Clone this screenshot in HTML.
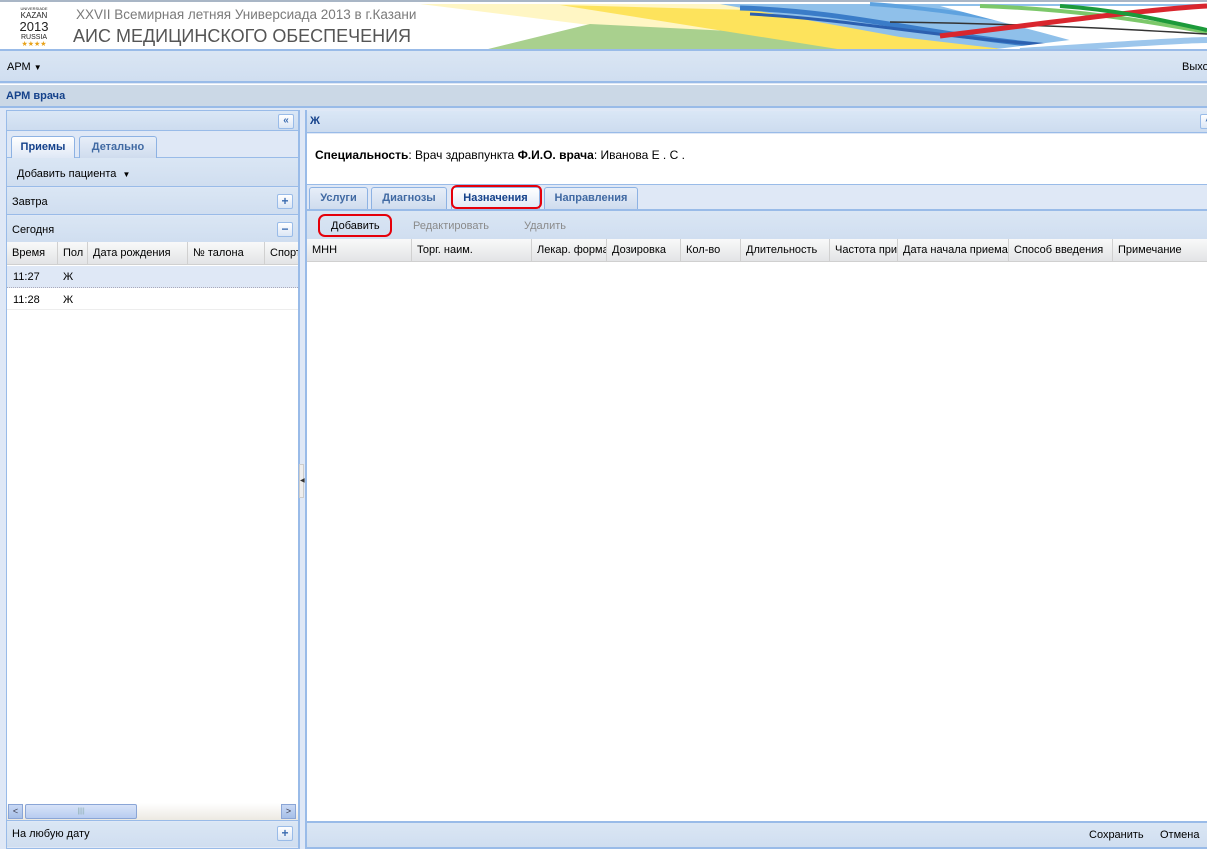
<!DOCTYPE html>
<html><head><meta charset="utf-8"><style>
*{margin:0;padding:0;box-sizing:border-box}
body{width:1207px;height:849px;overflow:hidden;position:relative;background:#dfe8f6;font-family:"Liberation Sans","DejaVu Sans",sans-serif;font-size:11px;color:#000}
.a{position:absolute}
.bar{background:linear-gradient(#dae6f4,#d0def0)}
.hdr{background:linear-gradient(#dae7f6,#cddcef);border-bottom:1px solid #99bbe8}
.tab{position:absolute;height:22px;border:1px solid #8db2e3;border-bottom:none;border-radius:3px 3px 0 0;background:linear-gradient(#e7eef8,#cfdcee);font-weight:bold;color:#416aa3;font-size:11px;line-height:20px;text-align:center}
.tab.on{background:linear-gradient(#fff,#dfe8f6);color:#15428b}
.gh{position:absolute;height:23px;background:linear-gradient(#f9f9f9,#e3e4e6);border-bottom:1px solid #d0d0d0}
.gh span{position:absolute;top:0;height:22px;line-height:22px;padding-left:5px;border-right:1px solid #d0d0d0;white-space:nowrap;overflow:hidden}
.tool{position:absolute;width:16px;height:15px;border:1px solid #99bbe8;border-radius:2px;background:linear-gradient(#fff,#dbe6f5);color:#3a6bb0;font-size:12px;line-height:12px;text-align:center;font-weight:bold}
</style></head><body>
<!-- header -->
<div class="a" style="left:0;top:0;width:1207px;height:51px;background:#fff;border-top:2px solid #a9b6c6;border-bottom:2px solid #99bbe8;overflow:hidden">
<svg class="a" style="left:420px;top:0" width="787" height="49" viewBox="0 0 787 49">
<polygon points="0,2 300,2 787,40 787,49 380,49" fill="#fff6c4"/>
<polygon points="60,49 170,22 330,30 500,49" fill="#a9d08e"/>
<polygon points="140,3 787,20 787,49 430,49" fill="#fde35c"/>
<polygon points="300,2 787,2 787,30 600,49 480,35" fill="#8fc0ea"/>
<path d="M320,6 C450,10 520,40 700,49" stroke="#3a7cc8" stroke-width="5" fill="none"/>
<path d="M330,12 C470,20 540,44 760,49" stroke="#2c60b0" stroke-width="3" fill="none"/>
<path d="M450,2 C550,8 700,40 787,42" stroke="#5ea2df" stroke-width="4" fill="none"/>
<polygon points="520,4 787,4 787,49 690,49 620,30" fill="#fff"/>
<path d="M560,4 C680,8 760,26 787,30" stroke="#7cc86a" stroke-width="4" fill="none"/>
<path d="M470,20 C620,22 720,28 787,32" stroke="#333" stroke-width="1.5" fill="none"/>
<path d="M520,34 C620,22 720,8 787,4" stroke="#d9262e" stroke-width="5" fill="none"/>
<path d="M640,4 C700,8 750,20 787,28" stroke="#1c9a3a" stroke-width="4" fill="none"/>
<polygon points="560,49 650,38 787,38 787,49" fill="#fff"/>
<path d="M600,49 C680,44 760,38 787,38" stroke="#9cc6ec" stroke-width="6" fill="none"/>
</svg>
<div class="a" style="left:14px;top:4px;width:40px;height:42px;font-size:8px;line-height:9px;text-align:center;color:#222">
<div style="font-size:4px;line-height:5px">UNIVERSIADE</div><div>KAZAN</div><div style="font-size:13px;line-height:13px">2013</div><div style="font-size:7px">RUSSIA</div><div style="color:#e8a21a;font-size:7px;line-height:6px">★★★★</div></div>
<div class="a" style="left:76px;top:5px;font-size:13.5px;color:#7a7a7a">XXVII Всемирная летняя Универсиада 2013 в г.Казани</div>
<div class="a" style="left:73px;top:24px;font-size:18px;color:#555">АИС МЕДИЦИНСКОГО ОБЕСПЕЧЕНИЯ</div>
</div>
<!-- toolbar -->
<div class="a bar" style="left:0;top:51px;width:1207px;height:32px;border-bottom:2px solid #99bbe8">
<div class="a" style="left:7px;top:10px">АРМ <span style="font-size:8px">▼</span></div>
<div class="a" style="left:1182px;top:10px">Выхо</div></div>
<div class="a" style="left:0;top:84px;width:1207px;height:24px;background:#cbd8e6;border-top:1px solid #fff;border-bottom:2px solid #99bbe8">
<div class="a" style="left:6px;top:5px;font-weight:bold;color:#15428b">АРМ врача</div></div>
<!-- left panel -->
<div class="a" style="left:6px;top:110px;width:293px;height:739px;border:1px solid #99bbe8;background:#dfe8f6"></div>
<div class="a hdr" style="left:7px;top:111px;width:291px;height:20px"></div>
<div class="tool" style="left:278px;top:114px;font-size:10px">«</div>
<div class="a" style="left:7px;top:157px;width:291px;height:1px;background:#99bbe8"></div>
<div class="tab on" style="left:11px;top:136px;width:64px">Приемы</div>
<div class="tab" style="left:79px;top:136px;width:78px">Детально</div>
<div class="a bar" style="left:7px;top:158px;width:291px;height:29px;border-bottom:1px solid #99bbe8"><div class="a" style="left:10px;top:10px">Добавить пациента &nbsp;<span style="font-size:8px">▼</span></div></div>
<div class="a bar" style="left:7px;top:188px;width:291px;height:27px;border-bottom:1px solid #99bbe8"><div class="a" style="left:5px;top:8px">Завтра</div></div>
<div class="tool" style="left:277px;top:194px">+</div>
<div class="a bar" style="left:7px;top:216px;width:291px;height:26px"><div class="a" style="left:5px;top:8px">Сегодня</div></div>
<div class="tool" style="left:277px;top:222px">−</div>
<div class="a" style="left:7px;top:242px;width:291px;height:561px;background:#fff;overflow:hidden">
<div class="gh" style="left:0;top:0;width:291px"><span style="left:0;width:51px">Время</span><span style="left:51px;width:30px">Пол</span><span style="left:81px;width:100px">Дата рождения</span><span style="left:181px;width:77px">№ талона</span><span style="left:258px;width:60px">Спорт</span></div>
<div class="a" style="left:0;top:24px;width:291px;height:22px;background:#dfe8f6;border-bottom:1px dotted #aab"><span class="a" style="left:6px;top:5px">11:27</span><span class="a" style="left:56px;top:5px">Ж</span></div>
<div class="a" style="left:0;top:47px;width:291px;height:21px;border-bottom:1px solid #ededed"><span class="a" style="left:6px;top:5px">11:28</span><span class="a" style="left:56px;top:5px">Ж</span></div>
</div>
<div class="a" style="left:7px;top:803px;width:291px;height:18px;background:linear-gradient(#fff,#ece9e2);border-bottom:1px solid #99bbe8"></div>
<div class="a" style="left:8px;top:804px;width:15px;height:15px;background:linear-gradient(#c8d8f4,#a6bfe8);border:1px solid #8aa5d6;color:#334;font-size:9px;text-align:center;line-height:13px">&lt;</div>
<div class="a" style="left:25px;top:804px;width:112px;height:15px;background:linear-gradient(#d7e3f8,#b8ccf0);border:1px solid #8aa5d6;border-radius:2px;color:#8aa;font-size:7px;text-align:center;line-height:13px">||||</div>
<div class="a" style="left:281px;top:804px;width:15px;height:15px;background:linear-gradient(#c8d8f4,#a6bfe8);border:1px solid #8aa5d6;color:#334;font-size:9px;text-align:center;line-height:13px">&gt;</div>
<div class="a bar" style="left:7px;top:822px;width:291px;height:25px"><div class="a" style="left:5px;top:6px">На любую дату</div></div>
<div class="tool" style="left:277px;top:826px">+</div>
<!-- splitter -->
<div class="a" style="left:299px;top:110px;width:6px;height:739px;background:#dfe8f6;border-left:1px solid #99bbe8"></div>
<div class="a" style="left:299px;top:464px;width:5px;height:34px;background:#eee;border:1px solid #ccc;font-size:6px;line-height:32px;color:#333">◀</div>
<!-- right panel -->
<div class="a" style="left:305px;top:110px;width:902px;height:739px;border-left:2px solid #99bbe8;background:#dfe8f6"></div>
<div class="a hdr" style="left:307px;top:111px;width:900px;height:22px"><div class="a" style="left:3px;top:4px;font-weight:bold;color:#15428b">Ж</div></div>
<div class="tool" style="left:1200px;top:114px;font-size:9px">^</div>
<div class="a" style="left:307px;top:134px;width:900px;height:51px;background:#fff;border-bottom:1px solid #99bbe8"><div class="a" style="left:8px;top:14px;font-size:12px"><b>Специальность</b>: Врач здравпункта <b>Ф.И.О. врача</b>: Иванова Е . С .</div></div>
<div class="tab" style="left:309px;top:187px;width:59px">Услуги</div>
<div class="tab" style="left:371px;top:187px;width:76px">Диагнозы</div>
<div class="tab on" style="left:451px;top:187px;width:89px">Назначения</div>
<div class="tab" style="left:544px;top:187px;width:94px">Направления</div>
<div class="a" style="left:451px;top:185px;width:91px;height:24px;border:2px solid #e5000a;border-radius:6px"></div>
<div class="a" style="left:307px;top:209px;width:900px;height:2px;background:#99bbe8"></div>
<div class="a bar" style="left:307px;top:211px;width:900px;height:28px"></div>
<div class="a" style="left:331px;top:220px">Добавить</div>
<div class="a" style="left:413px;top:220px;color:#8a8a8a">Редактировать</div>
<div class="a" style="left:524px;top:220px;color:#8a8a8a">Удалить</div>
<div class="a" style="left:318px;top:214px;width:74px;height:23px;border:2px solid #e5000a;border-radius:7px"></div>
<div class="a" style="left:307px;top:239px;width:900px;height:582px;background:#fff;overflow:hidden">
<div class="gh" style="left:0;top:0;width:900px"><span style="left:0;width:105px">МНН</span><span style="left:105px;width:120px">Торг. наим.</span><span style="left:225px;width:75px">Лекар. форма</span><span style="left:300px;width:74px">Дозировка</span><span style="left:374px;width:60px">Кол-во</span><span style="left:434px;width:89px">Длительность</span><span style="left:523px;width:68px">Частота приема</span><span style="left:591px;width:111px">Дата начала приема</span><span style="left:702px;width:104px">Способ введения</span><span style="left:806px;width:100px;border:none">Примечание</span></div>
</div>
<div class="a bar" style="left:307px;top:821px;width:900px;height:28px;border-top:2px solid #99bbe8;border-bottom:2px solid #99bbe8"><div class="a" style="left:782px;top:6px">Сохранить</div><div class="a" style="left:853px;top:6px">Отмена</div></div>
</body></html>
